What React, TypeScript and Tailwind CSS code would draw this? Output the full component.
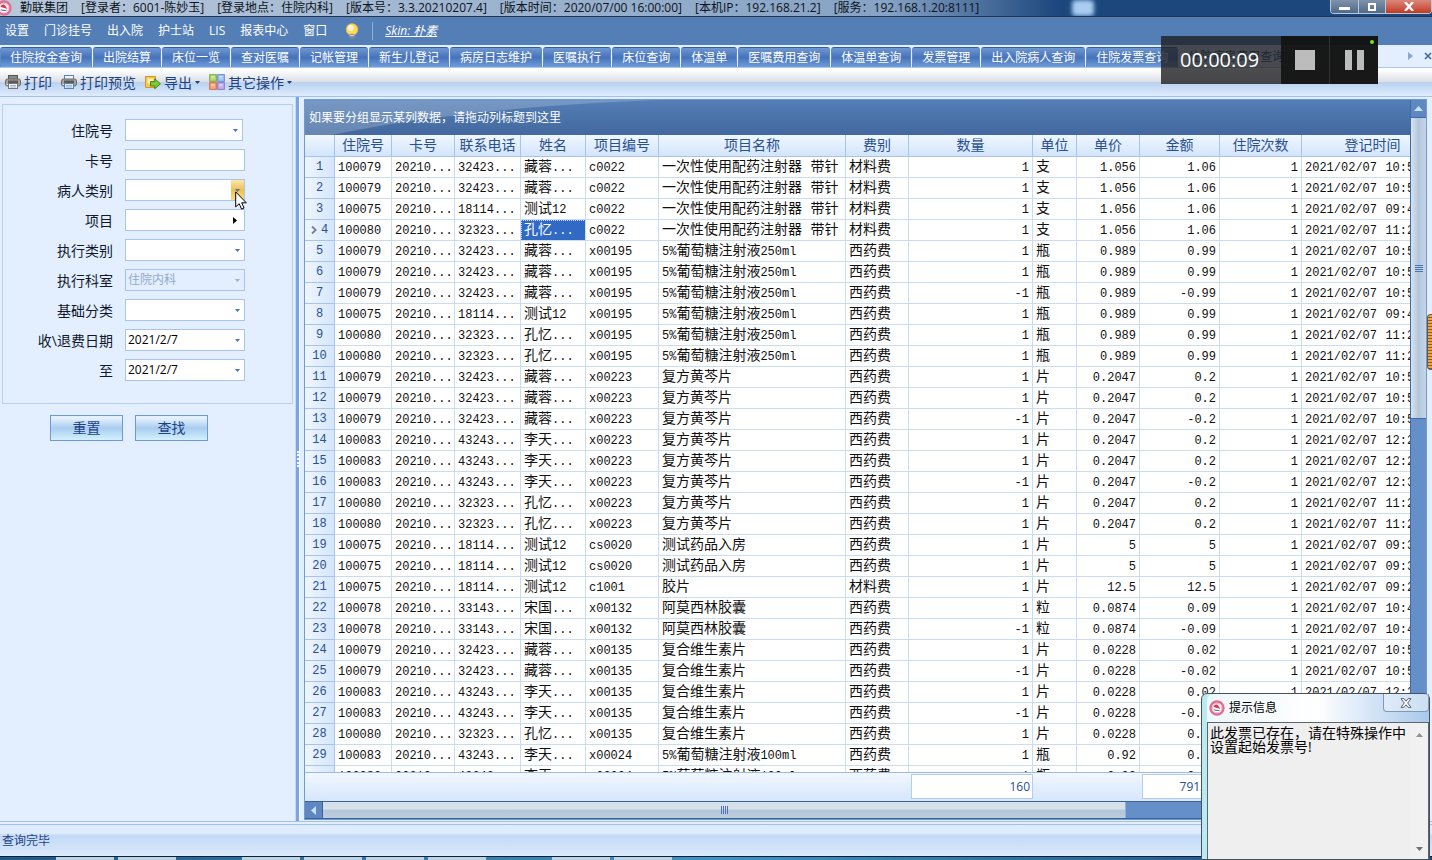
import React from "react";

const CJK = "font-['Open_Sans','Noto_Sans_CJK_SC',sans-serif]";

const titleParts = [
  "勤联集团",
  "[登录者：6001-陈妙玉]",
  "[登录地点：住院内科]",
  "[版本号：3.3.20210207.4]",
  "[版本时间：2020/07/00 16:00:00]",
  "[本机IP：192.168.21.2]",
  "[服务：192.168.1.20:8111]",
];

const menus = ["设置", "门诊挂号", "出入院", "护士站", "LIS", "报表中心", "窗口"];

const tabs = [
  "住院按金查询", "出院结算", "床位一览", "查对医嘱", "记帐管理", "新生儿登记", "病房日志维护", "医嘱执行",
  "床位查询", "体温单", "医嘱费用查询", "体温单查询", "发票管理", "出入院病人查询", "住院发票查询",
];

type Row = [string, string, string, string, string, string, string, string, string, string, string];

const SYR = "一次性使用配药注射器 带针";
const GLU = "5%葡萄糖注射液250ml";
const HQ = "复方黄芩片";
const VIT = "复合维生素片";
const AMX = "阿莫西林胶囊";
const M = "材料费";
const W = "西药费";
const T79 = "32423...";
const T75 = "18114...";
const T80 = "32323...";
const T83 = "43243...";

const rows: Row[] = [
  ["100079", T79, "藏蓉...", "c0022", SYR, M, "1", "支", "1.056", "1.06", "10:5"],
  ["100079", T79, "藏蓉...", "c0022", SYR, M, "1", "支", "1.056", "1.06", "10:5"],
  ["100075", T75, "测试12", "c0022", SYR, M, "1", "支", "1.056", "1.06", "09:4"],
  ["100080", T80, "孔忆...", "c0022", SYR, M, "1", "支", "1.056", "1.06", "11:2"],
  ["100079", T79, "藏蓉...", "x00195", GLU, W, "1", "瓶", "0.989", "0.99", "10:5"],
  ["100079", T79, "藏蓉...", "x00195", GLU, W, "1", "瓶", "0.989", "0.99", "10:5"],
  ["100079", T79, "藏蓉...", "x00195", GLU, W, "-1", "瓶", "0.989", "-0.99", "10:5"],
  ["100075", T75, "测试12", "x00195", GLU, W, "1", "瓶", "0.989", "0.99", "09:4"],
  ["100080", T80, "孔忆...", "x00195", GLU, W, "1", "瓶", "0.989", "0.99", "11:2"],
  ["100080", T80, "孔忆...", "x00195", GLU, W, "1", "瓶", "0.989", "0.99", "11:2"],
  ["100079", T79, "藏蓉...", "x00223", HQ, W, "1", "片", "0.2047", "0.2", "10:5"],
  ["100079", T79, "藏蓉...", "x00223", HQ, W, "1", "片", "0.2047", "0.2", "10:5"],
  ["100079", T79, "藏蓉...", "x00223", HQ, W, "-1", "片", "0.2047", "-0.2", "10:5"],
  ["100083", T83, "李天...", "x00223", HQ, W, "1", "片", "0.2047", "0.2", "12:2"],
  ["100083", T83, "李天...", "x00223", HQ, W, "1", "片", "0.2047", "0.2", "12:2"],
  ["100083", T83, "李天...", "x00223", HQ, W, "-1", "片", "0.2047", "-0.2", "12:3"],
  ["100080", T80, "孔忆...", "x00223", HQ, W, "1", "片", "0.2047", "0.2", "11:2"],
  ["100080", T80, "孔忆...", "x00223", HQ, W, "1", "片", "0.2047", "0.2", "11:2"],
  ["100075", T75, "测试12", "cs0020", "测试药品入房", W, "1", "片", "5", "5", "09:3"],
  ["100075", T75, "测试12", "cs0020", "测试药品入房", W, "1", "片", "5", "5", "09:3"],
  ["100075", T75, "测试12", "c1001", "胶片", M, "1", "片", "12.5", "12.5", "09:2"],
  ["100078", "33143...", "宋国...", "x00132", AMX, W, "1", "粒", "0.0874", "0.09", "10:4"],
  ["100078", "33143...", "宋国...", "x00132", AMX, W, "-1", "粒", "0.0874", "-0.09", "10:4"],
  ["100079", T79, "藏蓉...", "x00135", VIT, W, "1", "片", "0.0228", "0.02", "10:5"],
  ["100079", T79, "藏蓉...", "x00135", VIT, W, "-1", "片", "0.0228", "-0.02", "10:5"],
  ["100083", T83, "李天...", "x00135", VIT, W, "1", "片", "0.0228", "0.02", "12:2"],
  ["100083", T83, "李天...", "x00135", VIT, W, "-1", "片", "0.0228", "-0.02", "12:3"],
  ["100080", T80, "孔忆...", "x00135", VIT, W, "1", "片", "0.0228", "0.02", "11:2"],
  ["100083", T83, "李天...", "x00024", "5%葡萄糖注射液100ml", W, "1", "瓶", "0.92", "0.92", "12:2"],
  ["100083", T83, "李天...", "x00024", "5%葡萄糖注射液100ml", W, "1", "瓶", "0.92", "0.92", "12:2"],
];

const headers = ["", "住院号", "卡号", "联系电话", "姓名", "项目编号", "项目名称", "费别", "数量", "单位", "单价", "金额", "住院次数", "登记时间"];

function Cols() {
  return (
    <colgroup>
      <col className="w-[30px]" />
      <col className="w-[57px]" />
      <col className="w-[63px]" />
      <col className="w-[66px]" />
      <col className="w-[65px]" />
      <col className="w-[73px]" />
      <col className="w-[187px]" />
      <col className="w-[63px]" />
      <col className="w-[124px]" />
      <col className="w-[44px]" />
      <col className="w-[63px]" />
      <col className="w-[80px]" />
      <col className="w-[82px]" />
      <col className="w-[142px]" />
    </colgroup>
  );
}

/* Latin runs are set one step smaller than the Chinese text around them. */
function Mixed({ text }: { text: string }) {
  return (
    <>
      {text.split(/([\x21-\x7e]+)/).map((part, i) =>
        i % 2 ? <span key={i} className="text-[12px]">{part}</span> : <span key={i}>{part}</span>
      )}
    </>
  );
}

function Cell({ text, right, selected }: { text: string; right?: boolean; selected?: boolean }) {
  const side = right ? "text-right" : "text-left";
  const tone = selected
    ? "bg-[#316ac5] text-white outline-1 outline-dotted -outline-offset-1 outline-[#c8dcff]"
    : "";
  return (
    <td className={`h-[21px] overflow-hidden border-r border-b border-[#c9dcf0] px-[3px] py-0 leading-[16px] whitespace-nowrap ${side} ${tone}`}>
      <Mixed text={text} />
    </td>
  );
}

function Logo() {
  return (
    <svg viewBox="0 0 16 16" className="size-4 shrink-0">
      <circle cx="8" cy="8" r="6.5" fill="#fff" stroke="#e0708f" strokeWidth="2.4" />
      <circle cx="8" cy="8" r="4.7" fill="none" stroke="#f4b6c6" strokeWidth="1" />
      <path d="M4.500 7c.8-2.600 3.200-3.400 4.800-1.200L11.500 9 8.500 8z" fill="#d8324e" />
      <path d="M4.200 9.200c2 2.400 5.400 2.500 7.200.5-1.900.6-4.600.3-7.200-.5z" fill="#4a6db0" />
    </svg>
  );
}

function Printer({ light }: { light?: boolean }) {
  return (
    <svg viewBox="0 0 16 16" className="size-4 shrink-0">
      <rect x="3.500" y="1.500" width="9" height="5" fill={light ? "#eef6ff" : "#8a8a8a"} stroke={light ? "#5a82b5" : "#555"} />
      <rect x=".5" y="5" width="15" height="7" rx="2" fill="#a3a3a0" stroke="#6b6b68" />
      <rect x="3" y="6.500" width="10" height="3" fill="#5a5a58" />
      <rect x="1.500" y="10" width="2" height="1" fill="#e8e8e8" />
      <rect x="3.500" y="9.500" width="9" height="5" fill={light ? "#dcecff" : "#f2f2f2"} stroke={light ? "#5a82b5" : "#777"} />
      <path d="M5 11.500h6M5 13h6" stroke="#8a9db5" strokeWidth=".7" />
    </svg>
  );
}

function ExportIcon() {
  return (
    <svg viewBox="0 0 16 16" className="size-4 shrink-0">
      <path d="M.5 2.500h10v11H.5z" fill="#f6c843" stroke="#d0962a" />
      <path d="M2.500 4.500h6v5h-6z" fill="#fff0b8" />
      <path d="M5.500 7.500h4.300V4.800l5.700 5-5.700 5V12H5.500z" fill="#7cc83a" stroke="#3b7d16" strokeWidth=".9" />
    </svg>
  );
}

function GridIcon() {
  return (
    <svg viewBox="0 0 16 16" className="size-4 shrink-0" strokeWidth="1">
      <rect x=".7" y=".7" width="6.600" height="6.600" fill="#b8d879" stroke="#7ea53a" />
      <rect x="8.700" y=".7" width="6.600" height="6.600" fill="#a5c8f5" stroke="#5c8bd0" />
      <rect x=".7" y="8.700" width="6.600" height="6.600" fill="#f6ab86" stroke="#d8693c" />
      <rect x="8.700" y="8.700" width="6.600" height="6.600" fill="#c3b2ea" stroke="#8a72c8" />
      <path d="M2.500 3h3M10.500 3h3M2.500 11h3M10.500 11h3" stroke="#fff" strokeWidth="1.500" opacity=".5" />
    </svg>
  );
}

function Bulb() {
  return (
    <svg viewBox="0 0 16 16" className="size-4 shrink-0">
      <circle cx="8" cy="6.500" r="5.900" fill="#ffd95e" stroke="#e9a93a" strokeWidth=".6" />
      <circle cx="6.700" cy="4.900" r="3" fill="#fff7cf" />
      <path d="M5.500 11h5v3.200L9.300 15.500H6.700L5.500 14.200z" fill="#8d8f93" />
      <path d="M5.500 12.500h5" stroke="#dcdcdc" strokeWidth=".8" />
    </svg>
  );
}

function Down({ className }: { className: string }) {
  return (
    <svg viewBox="0 0 5 3" className={`h-[3px] w-[5px] shrink-0 ${className}`}>
      <path d="M0 0h5L2.500 3z" fill="currentColor" />
    </svg>
  );
}

type FieldProps = { id: string; label: string; kind?: "select" | "text" | "lookup"; value?: string; disabled?: boolean; hot?: boolean; short?: boolean };

function Field({ id, label, kind = "select", value = "", disabled, hot, short }: FieldProps) {
  const box = "h-[22px] w-full appearance-none rounded-none border border-[#a9c4e8] px-0.5 text-[12px] outline-none";
  return (
    <div className="flex h-[30px] items-center gap-3">
      <label htmlFor={id} className="w-[110px] text-right text-[14px] text-[#10182c]">{label}</label>
      <div className={`relative flex items-center ${short ? "w-[118px]" : "w-[120px]"}`}>
        {kind === "select" ? (
          <select id={id} disabled={disabled} defaultValue={value}
            className={`${box} ${disabled ? "bg-[#e3efff] text-[#94aacb] opacity-100" : "bg-white text-black"}`}>
            <option value={value}>{value}</option>
          </select>
        ) : (
          <input id={id} type="text" defaultValue={value} className={`${box} bg-white text-black`} />
        )}
        {kind === "select" && (
          <span className={`pointer-events-none absolute right-px flex h-5 w-[13px] items-center justify-center ${hot ? "bg-linear-to-b from-[#fbe6a8] via-[#f0c04e] to-[#fbdc7d]" : ""}`}>
            <Down className={disabled ? "text-[#9bb0cd]" : "text-[#4a76b2]"} />
          </span>
        )}
        {kind === "lookup" && (
          <svg viewBox="0 0 4 7" className="pointer-events-none absolute right-2 h-[7px] w-1"><path d="M0 0l4 3.500L0 7z" /></svg>
        )}
        {hot && (
          <svg viewBox="0 0 12 19" className="pointer-events-none absolute top-3 -right-0.5 z-10 h-[19px] w-3">
            <path d="M.7.9v15l3.500-3.200 2.400 5.400 2.500-1.100-2.400-5.200h4.600z" fill="#fff" stroke="#000" />
          </svg>
        )}
      </div>
    </div>
  );
}

function Filters() {
  return (
    <aside className="flex w-[295px] shrink-0 flex-col bg-[#e3efff] px-0.5 pt-[7px]">
      <form className="flex flex-col" onSubmit={(e) => e.preventDefault()}>
        <fieldset className="h-[300px] border border-[#b7cfee] pt-[10px]">
          <Field id="f1" label="住院号" short />
          <Field id="f2" label="卡号" kind="text" />
          <Field id="f3" label="病人类别" hot />
          <Field id="f4" label="项目" kind="lookup" />
          <Field id="f5" label="执行类别" />
          <Field id="f6" label="执行科室" value="住院内科" disabled />
          <Field id="f7" label="基础分类" />
          <Field id="f8" label="收\退费日期" value="2021/2/7" />
          <Field id="f9" label="至" value="2021/2/7" />
        </fieldset>
        <div className="mt-[11px] ml-12 flex gap-3">
          {["重置", "查找"].map((b) => (
            <button key={b} type="button" className="h-[26px] w-[73px] border border-[#6c9ad2] bg-linear-to-b from-[#e4f1fc] from-10% via-[#a9cdf0] via-50% to-[#d3f0fe] text-[14px] leading-5 text-[#1d4283]">{b}</button>
          ))}
        </div>
      </form>
    </aside>
  );
}

function DataGrid() {
  return (
    <section className="flex min-w-0 flex-1 flex-col border border-[#6f9bd3] bg-[#e6f0fd]">
      <div className="flex min-h-0 flex-1">
        <div className="flex min-w-0 flex-1 flex-col overflow-hidden">
          <div className="relative flex h-[35px] shrink-0 items-center bg-linear-to-b from-[#547eb6] to-[#42689f] px-1 text-[12px] text-white">
            <svg viewBox="0 0 1000 36" preserveAspectRatio="none" className="absolute inset-0 h-full w-full">
              <path d="M0 0H320C200 5 100 18 24 36H0z" fill="#fff" opacity=".2" />
            </svg>
            <span className="relative">如果要分组显示某列数据，请拖动列标题到这里</span>
          </div>
          <div className="min-h-0 flex-1 overflow-hidden bg-white">
            <table className="w-[1139px] table-fixed border-separate border-spacing-0 font-['Liberation_Mono','Noto_Sans_CJK_SC',monospace] text-[14px] text-[#111]">
              <Cols />
              <thead>
                <tr>
                  {headers.map((h, i) => (
                    <th key={i} scope="col" className="h-[22px] border-r border-b border-[#a9c4e8] bg-linear-to-b from-[#f0f7ff] to-[#d3e5fb] p-0 leading-[20px] font-normal whitespace-nowrap text-[#28508f]">{h}</th>
                  ))}
                </tr>
              </thead>
              <tbody>
                {rows.map((r, i) => (
                  <tr key={i}>
                    <th scope="row" className="h-[21px] border-r border-b border-[#a9c4e8] bg-linear-to-r from-[#eff6ff] to-[#d5e6fb] p-0 font-normal text-[#28508f]">
                      <span className="flex items-center justify-center gap-1 text-[12px] leading-[18px]">
                        {i === 3 && (
                          <svg viewBox="0 0 6 8" className="h-2 w-1.5"><path d="M1 .5L4.800 4 1 7.500" fill="none" stroke="#6d7f99" strokeWidth="1.800" /></svg>
                        )}
                        {i + 1 < 30 ? i + 1 : ""}
                      </span>
                    </th>
                    <Cell text={r[0]} />
                    <Cell text="20210..." />
                    <Cell text={r[1]} />
                    <Cell text={r[2]} selected={i === 3} />
                    <Cell text={r[3]} />
                    <Cell text={r[4]} />
                    <Cell text={r[5]} />
                    <Cell text={r[6]} right />
                    <Cell text={r[7]} />
                    <Cell text={r[8]} right />
                    <Cell text={r[9]} right />
                    <Cell text="1" right />
                    <Cell text={`2021/02/07 ${r[10]}`} />
                  </tr>
                ))}
              </tbody>
            </table>
          </div>
          <div className="h-[29px] shrink-0 overflow-hidden border-t border-[#9dbbe3] bg-linear-to-b from-[#f1f7ff] to-[#d6e7fb]">
            <table className="w-[1139px] table-fixed border-separate border-spacing-0 text-[12px] text-[#28508f]">
              <Cols />
              <tbody>
                <tr>
                  <td colSpan={8} />
                  <td className="h-[27px] py-px pr-0 pl-0.5 text-right"><span className="block border border-[#b4cdec] bg-white px-0.5 leading-[23px]">160</span></td>
                  <td colSpan={2} />
                  <td className="h-[27px] py-px pr-0 pl-0.5 text-right"><span className="block border border-[#b4cdec] bg-white px-0.5 leading-[23px]">791.46</span></td>
                  <td colSpan={2} />
                </tr>
              </tbody>
            </table>
          </div>
        </div>
        <div className="flex w-4 shrink-0 flex-col border-l border-[#3f6aa8] bg-[#648fc8]">
          <div className="flex h-[18px] shrink-0 items-center justify-center border-b border-[#3f6aa8] bg-[#5f88c0]">
            <svg viewBox="0 0 9 5" className="h-[5px] w-[9px]"><path d="M4.500 0L9 5H0z" fill="#c7e2ff" /></svg>
          </div>
          <div className="flex h-[301px] shrink-0 flex-col items-center justify-center gap-px border-b border-[#3f6aa8] bg-linear-to-r from-[#d9e3ee] via-[#b3c6dc] to-[#c6d6e8]">
            {[0, 1, 2, 3].map((n) => <span key={n} className="h-px w-2 bg-[#4a76b2]" />)}
          </div>
        </div>
      </div>
      <div className="flex h-[18px] shrink-0 border-y border-[#3b6199] bg-[#648fc8]">
        <div className="flex w-[18px] shrink-0 items-center justify-center border-r border-[#3b6199] bg-[#5f88c0]">
          <svg viewBox="0 0 5 9" className="h-[9px] w-[5px]"><path d="M0 4.500L5 0v9z" fill="#c7e2ff" /></svg>
        </div>
        <div className="flex w-[803px] items-center justify-center gap-px border-r border-[#8fb0d8] bg-linear-to-b from-[#d6e0ea] from-45% via-[#b4c6d9] via-50% to-[#bccddf]">
          {[0, 1, 2, 3].map((n) => <span key={n} className="h-2 w-px bg-[#4a76b2]" />)}
        </div>
      </div>
    </section>
  );
}

function Recorder() {
  return (
    <div className="absolute top-9 right-[54px] z-20 flex h-12 w-[217px]">
      <div className="flex w-[120px] items-center bg-linear-to-b from-[#1d1f24]/80 to-[#202020]/80 pl-[19px] text-[20px] text-white">00:00:09</div>
      <button type="button" aria-label="Stop" className="flex w-[49px] items-center justify-center border-r border-[#333] bg-[#111]/97">
        <span className="size-5 bg-[#bcbcbc]" />
      </button>
      <button type="button" aria-label="Pause" className="relative flex flex-1 items-center justify-center gap-[5px] bg-[#111]/97">
        <span className="h-5 w-[7px] bg-[#bcbcbc]" />
        <span className="h-5 w-[7px] bg-[#bcbcbc]" />
        <span className="absolute top-1 right-1 size-1 rounded-full bg-[#7be01e]" />
      </button>
    </div>
  );
}

function Notice() {
  return (
    <div role="dialog" aria-label="提示信息" className="absolute right-0.5 bottom-0 z-20 flex h-[167px] w-[229px] flex-col rounded-t-md border border-[#44525f] bg-linear-to-r from-[#b9eaf0] via-[#eef9fc] to-[#9fc6e6] pr-0 pl-[5px]">
      <div className="flex h-7 shrink-0 items-center gap-1 rounded-t-md bg-linear-to-r from-[#eef7fb] via-white to-[#a8c9ec] pl-0.5">
        <Logo />
        <h2 className="flex-1 text-[12px] text-black">提示信息</h2>
        <button type="button" aria-label="Close" className="mb-auto flex h-[18px] w-[46px] items-center justify-center rounded-b border border-t-0 border-[#8199b3] bg-white/40">
          <svg viewBox="0 0 12 10" className="h-[10px] w-3"><path d="M1 .7h3L6 3.200 8 .7h3L7.700 5 11 9.300H8L6 6.800 4 9.300H1L4.300 5z" fill="#fff" stroke="#4c5560" strokeWidth=".9" /></svg>
        </button>
      </div>
      <div className="flex min-h-0 flex-1 border border-b-0 border-[#5c6670] bg-[#efefef]">
        <p className="min-w-0 flex-1 pt-[3px] pl-0.5 text-[14px] leading-[14px] whitespace-nowrap text-black">此发票已存在，请在特殊操作中<br />设置起始发票号!</p>
        <div className="flex w-[18px] shrink-0 flex-col items-center justify-between bg-[#f1f1f1] pt-[10px] pb-2">
          <svg viewBox="0 0 7 4" className="h-1 w-[7px]"><path d="M3.500 0L7 4H0z" fill="#909090" /></svg>
          <svg viewBox="0 0 7 4" className="h-1 w-[7px]"><path d="M0 0h7L3.500 4z" fill="#707070" /></svg>
        </div>
      </div>
    </div>
  );
}

export default function App() {
  return (
    <div className={`relative flex h-screen flex-col overflow-hidden bg-[#e3efff] ${CJK}`}>
      <header className="flex h-[17px] shrink-0 items-start overflow-hidden border-b border-[#23344c] bg-linear-to-r from-[#b9c9dc] via-[#86a2c4] via-62% to-[#1b477d] to-74%">
        <div className="flex min-w-0 flex-1 items-center gap-[13px] text-[12px] leading-[14px] whitespace-nowrap text-[#0c1320]">
          <span className="flex items-center gap-2"><span className="-ml-1 flex"><Logo /></span>{titleParts[0]}</span>
          {titleParts.slice(1).map((t) => <span key={t}>{t}</span>)}
          <span className="ml-20 h-4 w-[22px] rounded bg-[#a9cdf0] blur-[2px]" />
        </div>
        <div className="flex h-[14px] w-[102px] shrink-0 overflow-hidden rounded-b border border-t-0 border-[#b9c8d8]">
          <button type="button" aria-label="Minimize" className="flex w-[28px] items-center justify-center border-r border-[#b9c8d8] bg-linear-to-b from-[#7f93aa] to-[#4f6a88]"><span className="mt-1 h-[3px] w-[11px] bg-white" /></button>
          <button type="button" aria-label="Restore" className="flex w-[27px] items-center justify-center border-r border-[#b9c8d8] bg-linear-to-b from-[#7f93aa] to-[#4f6a88]"><span className="size-2 border-2 border-white" /></button>
          <button type="button" aria-label="Close" className="flex flex-1 items-center justify-center bg-linear-to-b from-[#d9877a] to-[#c2361f]">
            <svg viewBox="0 0 10 9" className="h-[9px] w-[10px]"><path d="M1 0l8 9M9 0L1 9" stroke="#fff" strokeWidth="2.400" /></svg>
          </button>
        </div>
      </header>

      <nav className="flex h-7 shrink-0 items-center bg-[#547eb6] pl-[5px] text-[12px] text-white">
        <div className="flex items-center gap-[15px]">
          {menus.map((m) => <button key={m} type="button">{m}</button>)}
        </div>
        <span className="ml-[17px] flex"><Bulb /></span>
        <span className="ml-3 h-[18px] w-px bg-[#8fafd9]" />
        <a href="#skin" className="ml-3 italic underline">Skin: 朴素</a>
      </nav>

      <div className="flex h-[23px] shrink-0 items-end border-b border-[#a9c8ee] bg-[#e3efff] text-[12px]">
        <div className="flex min-w-0 flex-1 gap-px overflow-hidden whitespace-nowrap">
          {tabs.map((t) => (
            <button key={t} type="button" className="h-5 shrink-0 rounded-t-[3px] border-x border-t border-x-[#5f8cc8] border-t-[#35609e] bg-linear-to-b from-[#6f98d2] via-[#4673b9] to-[#719ddb] px-[9px] leading-[18px] text-white">{t}</button>
          ))}
          <button type="button" className="h-5 shrink-0 px-[9px] leading-[18px] text-[#1d4283]">住院病房费用查询</button>
        </div>
        <div className="flex h-full w-[24px] shrink-0 items-center justify-between">
          <svg viewBox="0 0 5 8" className="h-2 w-[5px]"><path d="M0 0l5 4-5 4z" fill="#8ba6cf" /></svg>
          <svg viewBox="0 0 8 8" className="size-2"><path d="M1 1l6 6M7 1L1 7" stroke="#3e67a5" strokeWidth="1.600" /></svg>
        </div>
      </div>

      <div className="flex h-[29px] shrink-0 items-center gap-[9px] border-b border-[#a2c1ea] bg-linear-to-b from-white from-5% via-[#dcdfe6] via-50% to-[#dceafc] to-95% text-[14px] text-[#1d4283]">
        <div className="flex h-full flex-1 items-center gap-[9px] bg-linear-to-b from-transparent from-50% via-[#b9d2f0] via-52% to-[#dfecfd] pl-[5px]">
          <button type="button" className="flex items-center gap-[3px]"><Printer />打印</button>
          <button type="button" className="flex items-center gap-[3px]"><Printer light />打印预览</button>
          <button type="button" className="flex items-center gap-[3px]"><ExportIcon />导出<Down className="text-[#1d4283]" /></button>
          <button type="button" className="flex items-center gap-[3px]"><GridIcon />其它操作<Down className="text-[#1d4283]" /></button>
        </div>
      </div>

      <main className="flex min-h-0 flex-1 border-b border-[#a2c1ea] pr-[5px]">
        <Filters />
        <div className="mr-1 flex w-[5px] shrink-0 items-center justify-center border-r border-l border-r-[#f5faff] border-l-[#c6dbf6] bg-[#7ba5dc]">
          <span className="h-4 border-l-2 border-dotted border-white" />
        </div>
        <div className="flex min-w-0 flex-1 pt-0.5 pb-px"><DataGrid /></div>
      </main>

      <footer className="mt-0.5 flex h-8 shrink-0 items-center border-t border-[#a2c1ea] bg-linear-to-b from-[#dfecfd] from-25% via-[#c2d9f6] via-35% to-[#dceafc] pl-0.5 text-[12px] text-[#1d4283]">查询完毕</footer>
      <div className="flex h-1 shrink-0 gap-1 border-t border-[#12202e] bg-linear-to-r from-[#1f5a8c] via-[#3f95c4] to-[#1b477d] pl-14">
        {[0, 1, 2, 3, 4, 5, 6, 7, 8, 9].map((n) => (
          <span key={n} className={`w-[58px] ${n === 2 || n === 7 ? "" : "bg-[#b8d6e8]"}`} />
        ))}
      </div>

      <Recorder />
      <Notice />
      <div className="absolute top-[314px] right-0 z-20 h-14 w-[5px] rounded-l border border-r-0 border-[#5a5a5a] bg-[repeating-linear-gradient(to_bottom,#f0a83c_0_2px,#8a5a1c_2px_3px)]" />
    </div>
  );
}
